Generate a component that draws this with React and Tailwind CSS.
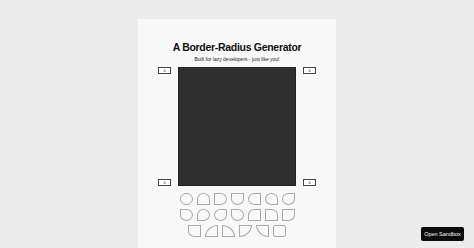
import React from 'react'

const shapes = [
  [
    'rounded-full',
    'rounded-t-[50%]',
    'rounded-r-[50%]',
    'rounded-b-[50%]',
    'rounded-l-[50%]',
    'rounded-tl-[50%] rounded-tr-[50%] rounded-bl-[50%]',
    'rounded-tl-[50%] rounded-bl-[50%] rounded-br-[50%]',
  ],
  [
    'rounded-tr-[50%] rounded-br-[50%] rounded-bl-[50%]',
    'rounded-tl-[50%] rounded-tr-[50%] rounded-br-[50%]',
    'rounded-tl-[50%] rounded-bl-[50%] rounded-br-[50%] rounded-tr-[2px]',
    'rounded-tr-[50%] rounded-bl-[50%] rounded-br-[50%]',
    'rounded-tl-[50%]',
    'rounded-tr-[50%]',
    'rounded-br-[50%]',
  ],
  [
    'rounded-bl-[50%]',
    'rounded-tl-[100%]',
    'rounded-tr-[100%]',
    'rounded-br-[100%]',
    'rounded-bl-[100%]',
    'rounded-[2px]',
  ],
]

function RadiusInput() {
  return (
    <div className="w-[13px] h-[7px] border border-[#444] bg-white flex items-center justify-center text-[4px] leading-none text-[#222]">
      0
    </div>
  )
}

export default function App() {
  return (
    <div className="w-[474px] h-[248px] bg-[#ececec] relative overflow-hidden font-['Liberation_Sans',Arial,sans-serif]">
      <div className="mx-auto mt-[19px] w-[198px] h-[229px] bg-[#f8f8f8] flex flex-col items-center">
        <h1 className="mt-[21px] text-[10.5px] font-bold leading-[14px] tracking-[-0.3px] text-[#111]">
          A Border-Radius Generator
        </h1>
        <p className="mt-[2px] text-[5px] leading-[7px] text-[#222]">
          Built for lazy developers - just like you!
        </p>

        {/* preview row */}
        <div className="mt-[4px] flex gap-[7px]">
          <div className="flex flex-col justify-between">
            <RadiusInput />
            <RadiusInput />
          </div>
          <div className="w-[118px] h-[119px] bg-[#2f2f2f] border border-[#222]" />
          <div className="flex flex-col justify-between">
            <RadiusInput />
            <RadiusInput />
          </div>
        </div>

        {/* presets */}
        <div className="mt-[7px] flex flex-col items-center gap-[4px]">
          {shapes.map((row, i) => (
            <div className="flex gap-[4px]" key={i}>
              {row.map((s, j) => (
                <div key={j} className={'w-[13px] h-[12px] border border-[#a8a8a8] ' + s} />
              ))}
            </div>
          ))}
        </div>
      </div>

      <button className="absolute right-[10px] bottom-[7px] w-[43px] h-[14px] bg-[#0b0b0b] text-white text-[5.5px] rounded-[2px]">
        Open Sandbox
      </button>
    </div>
  )
}
